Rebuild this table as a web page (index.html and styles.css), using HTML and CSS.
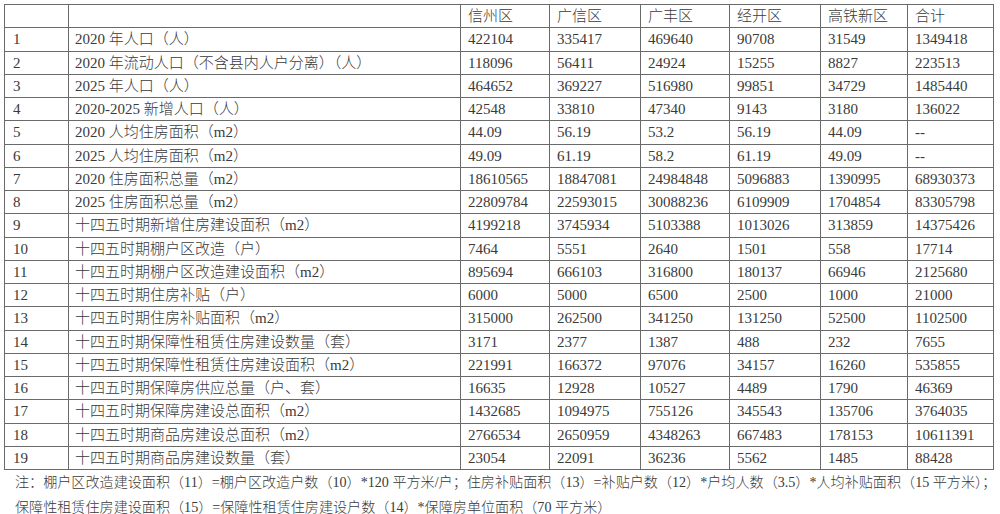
FILE: index.html
```html
<!DOCTYPE html>
<html lang="zh">
<head>
<meta charset="utf-8">
<link rel="stylesheet" href="styles.css">
</head>
<body>
<div class="page">
<table class="data">
<colgroup>
<col class="c-idx"><col class="c-label"><col class="c-a"><col class="c-b"><col class="c-c"><col class="c-d"><col class="c-e"><col class="c-f">
</colgroup>
<thead>
<tr><th></th><th></th><th>信州区</th><th>广信区</th><th>广丰区</th><th>经开区</th><th>高铁新区</th><th>合计</th></tr>
</thead>
<tbody>
<tr><td>1</td><td>2020 年人口（人）</td><td>422104</td><td>335417</td><td>469640</td><td>90708</td><td>31549</td><td>1349418</td></tr>
<tr><td>2</td><td>2020 年流动人口（不含县内人户分离）（人）</td><td>118096</td><td>56411</td><td>24924</td><td>15255</td><td>8827</td><td>223513</td></tr>
<tr><td>3</td><td>2025 年人口（人）</td><td>464652</td><td>369227</td><td>516980</td><td>99851</td><td>34729</td><td>1485440</td></tr>
<tr><td>4</td><td>2020-2025 新增人口（人）</td><td>42548</td><td>33810</td><td>47340</td><td>9143</td><td>3180</td><td>136022</td></tr>
<tr><td>5</td><td>2020 人均住房面积（m2）</td><td>44.09</td><td>56.19</td><td>53.2</td><td>56.19</td><td>44.09</td><td>--</td></tr>
<tr><td>6</td><td>2025 人均住房面积（m2）</td><td>49.09</td><td>61.19</td><td>58.2</td><td>61.19</td><td>49.09</td><td>--</td></tr>
<tr><td>7</td><td>2020 住房面积总量（m2）</td><td>18610565</td><td>18847081</td><td>24984848</td><td>5096883</td><td>1390995</td><td>68930373</td></tr>
<tr><td>8</td><td>2025 住房面积总量（m2）</td><td>22809784</td><td>22593015</td><td>30088236</td><td>6109909</td><td>1704854</td><td>83305798</td></tr>
<tr><td>9</td><td>十四五时期新增住房建设面积（m2）</td><td>4199218</td><td>3745934</td><td>5103388</td><td>1013026</td><td>313859</td><td>14375426</td></tr>
<tr><td>10</td><td>十四五时期棚户区改造（户）</td><td>7464</td><td>5551</td><td>2640</td><td>1501</td><td>558</td><td>17714</td></tr>
<tr><td>11</td><td>十四五时期棚户区改造建设面积（m2）</td><td>895694</td><td>666103</td><td>316800</td><td>180137</td><td>66946</td><td>2125680</td></tr>
<tr><td>12</td><td>十四五时期住房补贴（户）</td><td>6000</td><td>5000</td><td>6500</td><td>2500</td><td>1000</td><td>21000</td></tr>
<tr><td>13</td><td>十四五时期住房补贴面积（m2）</td><td>315000</td><td>262500</td><td>341250</td><td>131250</td><td>52500</td><td>1102500</td></tr>
<tr><td>14</td><td>十四五时期保障性租赁住房建设数量（套）</td><td>3171</td><td>2377</td><td>1387</td><td>488</td><td>232</td><td>7655</td></tr>
<tr><td>15</td><td>十四五时期保障性租赁住房建设面积（m2）</td><td>221991</td><td>166372</td><td>97076</td><td>34157</td><td>16260</td><td>535855</td></tr>
<tr><td>16</td><td>十四五时期保障房供应总量（户、套）</td><td>16635</td><td>12928</td><td>10527</td><td>4489</td><td>1790</td><td>46369</td></tr>
<tr><td>17</td><td>十四五时期保障房建设总面积（m2）</td><td>1432685</td><td>1094975</td><td>755126</td><td>345543</td><td>135706</td><td>3764035</td></tr>
<tr><td>18</td><td>十四五时期商品房建设总面积（m2）</td><td>2766534</td><td>2650959</td><td>4348263</td><td>667483</td><td>178153</td><td>10611391</td></tr>
<tr><td>19</td><td>十四五时期商品房建设数量（套）</td><td>23054</td><td>22091</td><td>36236</td><td>5562</td><td>1485</td><td>88428</td></tr>
</tbody>
</table>
<p class="note">注：棚户区改造建设面积（11）=棚户区改造户数（10）*120 平方米/户；住房补贴面积（13）=补贴户数（12）*户均人数（3.5）*人均补贴面积（15 平方米）；<br>保障性租赁住房建设面积（15）=保障性租赁住房建设户数（14）*保障房单位面积（70 平方米）</p>
</div>
</body>
</html>
```
FILE: styles.css
```css
html, body {
  margin: 0;
  padding: 0;
  background: #ffffff;
}
body {
  font-family: "Liberation Serif", "Noto Sans CJK SC", serif;
  font-weight: 300;
  color: #3a3a3a;
}
.page {
  padding: 4px 0 0 4px;
}
.data {
  border-collapse: collapse;
  table-layout: fixed;
  width: 989px;
  font-size: 15px;
}
.c-idx { width: 64px; }
.c-label { width: 392px; }
.c-a { width: 89px; }
.c-b { width: 91px; }
.c-c { width: 89px; }
.c-d { width: 91px; }
.c-e { width: 87px; }
.c-f { width: 86px; }
.data tr {
  height: 23.25px;
}
.data th, .data td {
  border: 1px solid #6a6a6a;
  padding: 0 0 0 7px;
  text-align: left;
  font-weight: 300;
  white-space: nowrap;
  overflow: hidden;
  line-height: 20px;
  vertical-align: middle;
}
.data td:first-child, .data th:first-child {
  padding-left: 8px;
}
.data td:nth-child(2) {
  padding-left: 6px;
}
.note {
  margin: 0;
  padding: 0 0 0 11px;
  font-size: 14.1px;
  line-height: 25px;
  white-space: nowrap;
}
```
